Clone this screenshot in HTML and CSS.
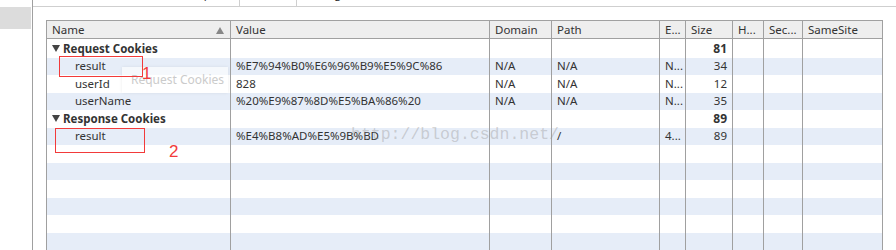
FILE: index.html
```html
<!DOCTYPE html>
<html lang="en">
<head>
    <meta charset="UTF-8">
    <title>Cookies</title>
    <link rel="stylesheet" href="styles.css">
</head>
<body>
    <div class="devtools">
        <!-- Left strip -->
        <div class="sidebar">
            <div class="side-item"></div>
        </div>

        <!-- Network details -->
        <div class="details">
            <div class="tabs">
                <span class="tab tab-a">Response</span>
                <span class="tab tab-b">Cookies</span>
                <span class="tab tab-c">Timing</span>
            </div>
            <div class="content">
                <table class="cookies">
                    <colgroup>
                        <col style="width:184px"><col style="width:259px"><col style="width:62px">
                        <col style="width:108px"><col style="width:26px"><col style="width:47px">
                        <col style="width:31px"><col style="width:39px"><col style="width:80px">
                    </colgroup>
                    <thead>
                        <tr>
                            <th class="sorted">Name <span class="sort"></span></th>
                            <th>Value</th><th>Domain</th><th>Path</th><th>E...</th><th>Size</th><th>H...</th><th>Sec...</th><th>SameSite</th>
                        </tr>
                    </thead>
                    <tbody>
                        <tr class="group first">
                            <td><span class="arrow"></span>Request Cookies</td>
                            <td></td><td></td><td></td><td></td><td class="num">81</td><td></td><td></td><td></td>
                        </tr>
                        <tr class="odd">
                            <td class="child">result</td>
                            <td>%E7%94%B0%E6%96%B9%E5%9C%86</td><td>N/A</td><td>N/A</td><td>N...</td><td class="num">34</td><td></td><td></td><td></td>
                        </tr>
                        <tr class="even">
                            <td class="child">userId</td>
                            <td>828</td><td>N/A</td><td>N/A</td><td>N...</td><td class="num">12</td><td></td><td></td><td></td>
                        </tr>
                        <tr class="odd">
                            <td class="child">userName</td>
                            <td>%20%E9%87%8D%E5%BA%86%20</td><td>N/A</td><td>N/A</td><td>N...</td><td class="num">35</td><td></td><td></td><td></td>
                        </tr>
                        <tr class="group even">
                            <td><span class="arrow"></span>Response Cookies</td>
                            <td></td><td></td><td></td><td></td><td class="num">89</td><td></td><td></td><td></td>
                        </tr>
                        <tr class="odd">
                            <td class="child">result</td>
                            <td>%E4%B8%AD%E5%9B%BD</td><td></td><td>/</td><td>4...</td><td class="num">89</td><td></td><td></td><td></td>
                        </tr>
                        <tr class="even"><td></td><td></td><td></td><td></td><td></td><td></td><td></td><td></td><td></td></tr>
                        <tr class="odd"><td></td><td></td><td></td><td></td><td></td><td></td><td></td><td></td><td></td></tr>
                        <tr class="even"><td></td><td></td><td></td><td></td><td></td><td></td><td></td><td></td><td></td></tr>
                        <tr class="odd"><td></td><td></td><td></td><td></td><td></td><td></td><td></td><td></td><td></td></tr>
                        <tr class="even"><td></td><td></td><td></td><td></td><td></td><td></td><td></td><td></td><td></td></tr>
                        <tr class="odd"><td></td><td></td><td></td><td></td><td></td><td></td><td></td><td></td><td></td></tr>
                        <tr class="even"><td></td><td></td><td></td><td></td><td></td><td></td><td></td><td></td><td></td></tr>
                    </tbody>
                </table>

                <!-- annotations drawn on top of the screenshot -->
                <div class="ghost-tip">Request Cookies</div>
                <div class="mark mark-1"></div>
                <div class="mark-num num-1">1</div>
                <div class="mark mark-2"></div>
                <div class="mark-num num-2">2</div>
                <div class="watermark">http://blog.csdn.net/</div>
            </div>
        </div>
    </div>
</body>
</html>
```

FILE: styles.css
```css
* { box-sizing: border-box; margin: 0; padding: 0; }
html, body { height: 100%; overflow: hidden; }
body { font-family: 'Noto Sans', 'Open Sans', sans-serif; font-size: 11.5px; color: #333; background: #fff; }
.devtools { display: flex; height: 100%; }
.sidebar { width: 33px; border-right: 1px solid #a0a0a0; padding-top: 7px; flex-shrink: 0; }
.side-item { width: 31px; height: 22px; background: #dcdcdc; }
.details { flex: 1; display: flex; flex-direction: column; min-width: 0; }
.tabs { height: 7px; flex-shrink: 0; border-bottom: 1px solid #cfcfcf; display: flex; overflow: hidden; }
.tab { line-height: 12px; margin-top: -12px; white-space: nowrap; color: #333; }
.tab-a { width: 207px; padding-right: 2px; text-align: right; border-right: 1px solid #cfcfcf; }
.tab-b { width: 57px; border-right: 1px solid #cfcfcf; color: transparent; }
.tab-c { padding-left: 7px; }
.content { position: relative; padding: 13px 0 0 13px; flex: 1; }
.cookies { border-collapse: collapse; table-layout: fixed; width: 837px; border: 1px solid #a0a0a0; }
.cookies th { background: #eeeeee; font-weight: 400; text-align: left; height: 18px; padding: 0 5px; border: 1px solid #a0a0a0; border-top: none; white-space: nowrap; overflow: hidden; line-height: 16px; }
.cookies th.sorted { position: relative; }
.sort { position: absolute; right: 6px; top: 6px; width: 0; height: 0; border-left: 4px solid transparent; border-right: 4px solid transparent; border-bottom: 7px solid #888; }
.cookies td { border-left: 1px solid #a0a0a0; border-right: 1px solid #a0a0a0; padding: 0 5px; white-space: nowrap; overflow: hidden; line-height: 16px; }
.cookies tr.first td { height: 19px; padding-top: 1px; }
.cookies tr.odd td { height: 17px; background: #e6edf8; }
.cookies tr.even td { height: 18px; }
.group td { font-weight: 700; font-size: 11.5px; }
.group td.num { font-size: 12px; }
.arrow { display: inline-block; width: 0; height: 0; margin-right: 3px; border-left: 4px solid transparent; border-right: 4px solid transparent; border-top: 7px solid #444; position: relative; top: -1px; }
.child { padding-left: 28px !important; }
.num { text-align: right; }
.ghost-tip { position: absolute; left: 89px; top: 60px; width: 106px; height: 26px; padding: 5px 9px; font-size: 12px; line-height: 16px; color: #cbcbcb; background: rgba(255, 255, 255, 0.6); box-shadow: 0 0 3px rgba(0, 0, 0, 0.08); white-space: nowrap; }
.mark { position: absolute; border: 1px solid #f23a3a; }
.mark-1 { left: 26px; top: 49px; width: 84px; height: 21px; }
.mark-2 { left: 22px; top: 121px; width: 90px; height: 25px; }
.mark-num { position: absolute; font-family: 'Liberation Sans', sans-serif; font-size: 17px; color: #f23a3a; line-height: 17px; }
.num-1 { left: 109px; top: 58px; }
.num-2 { left: 136px; top: 136px; }
.watermark { position: absolute; left: 318px; top: 118px; font-family: 'Liberation Mono', monospace; font-size: 16.5px; color: rgba(150, 150, 150, 0.4); white-space: nowrap; }
```
